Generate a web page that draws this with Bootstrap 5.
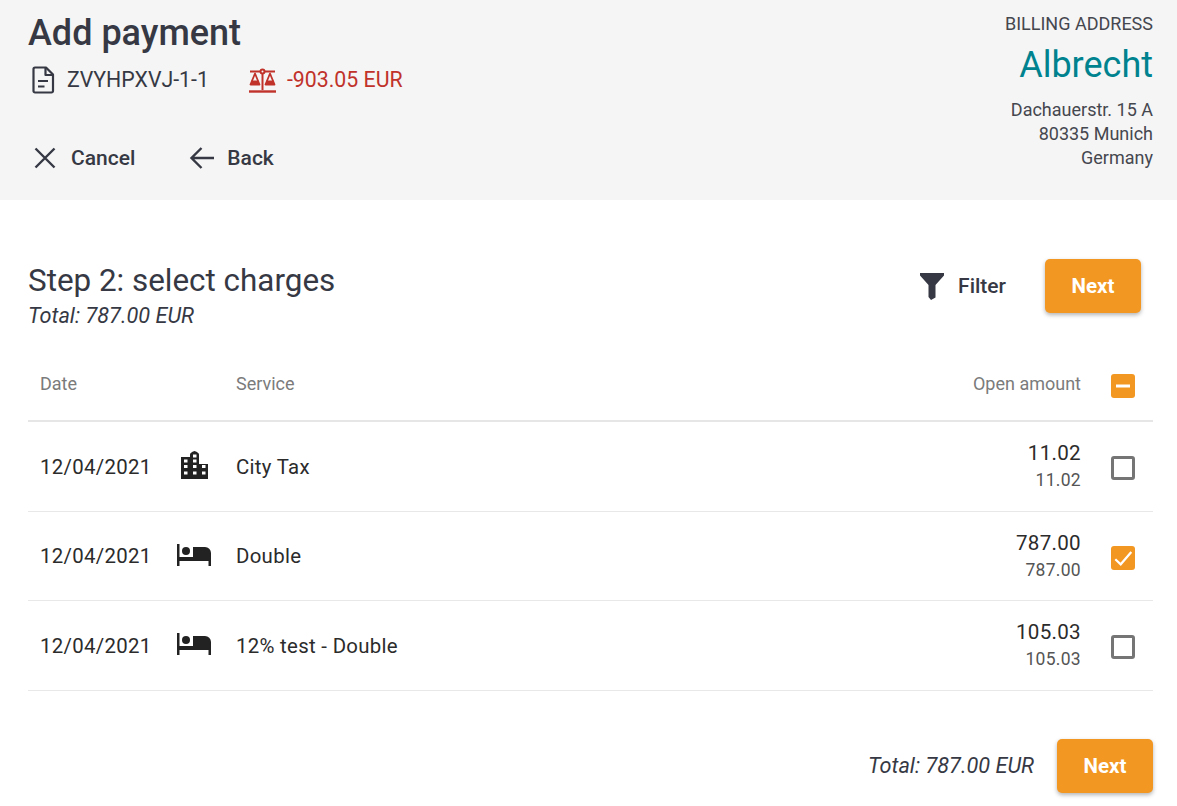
<!DOCTYPE html>
<html lang="en">
<head>
<meta charset="utf-8">
<title>Add payment</title>
<link href="https://cdn.jsdelivr.net/npm/bootstrap@5.3.0/dist/css/bootstrap.min.css" rel="stylesheet">
<style>
html,body{height:806px;overflow:hidden}
body{font-family:Roboto,"Liberation Sans",sans-serif;color:#2b2b2b;background:#fff}
.head-band{background:#f5f5f5;height:200px;padding:12px 24px 0 28px;color:#363944}
.page-title{font-size:36px;font-weight:500;line-height:42px;margin:0}
.meta-row{margin-top:8px;height:36px;font-size:21.3px;line-height:24px;gap:40px}
.meta-item{gap:12px}
.meta-item svg{display:block}
.meta-doc{padding-left:3px}
.meta-neg{gap:11px}
.neg{color:#c0322a}
.act-row{margin-top:48px;gap:53px;padding-left:6px}
.act{gap:15px;color:#363944;background:none;border:0;padding:0;font-weight:500;font-size:21px;line-height:24px}
.act-back{gap:13px}
.bill{text-align:right;font-size:18px;line-height:24px;color:#45474f;margin-top:-1px}
.bill-label{font-size:18px;line-height:24px;margin-top:1px}
.bill-name{font-size:36px;line-height:40px;color:#00838f;margin:9px 0 13px;font-weight:400}
.main-band{padding:0 24px 0 28px}
.step-row{height:150px;padding-top:60px}
.step-title{font-size:31.4px;line-height:41px;margin:0;font-weight:400;color:#363944}
.step-total{font-style:italic;font-size:21.7px;line-height:24px;color:#363944;margin-top:3px}
.next-btn{background:#f39723;color:#fff;font-weight:700;font-size:20.5px;width:96px;height:54px;border:0;border-radius:5px;box-shadow:0 2px 4px rgba(0,0,0,.3);padding:0}
.next-foot{padding-top:2px}
.filter-btn{background:none;border:0;padding:0;color:#363944;font-weight:500;font-size:21px;gap:13px}
.filter-label{padding-top:2px}
.top-actions{gap:39px;padding-right:12px;margin-top:-1px}
.charge-table{margin:0;table-layout:fixed;width:100%;--bs-table-bg:transparent;color:#2b2b2b}
.charge-table th{font-weight:400;font-size:18px;color:#7b7b7b;height:71px;padding:0 12px 3px;border-bottom:2px solid #e6e6e6;vertical-align:middle}
.charge-table td{font-size:20.4px;height:90px;padding:2px 12px 0;border-bottom:1px solid #e8e8e8;vertical-align:middle;letter-spacing:.3px}
.charge-table .row-mid td{height:89px}
.charge-table .col-date{width:196px}
.charge-table th.col-check{width:60px;padding:1px 0 0 18px}
.charge-table td.col-check{padding:4px 0 0 18px}
.charge-table .amt-cell{padding-top:1px}
.charge-table .row-mid .amt-cell{padding-top:3px}
.date-cell{gap:28px}
.date-cell svg{display:block;flex:none}
.city-ic{margin-top:-5px;margin-left:1px}
.bed-ic{margin-top:-3px;margin-left:-3px}
.amt-main{font-size:20.6px;line-height:27px}
.amt-sub{font-size:17.5px;line-height:27px;color:#555}
.box{display:block;width:24px;height:24px;border-radius:3px}
.box svg{display:block}
.box-empty{border:3px solid #757575}
.box-on{background:#f39723}
.foot-row{margin-top:48px;gap:23px}
.foot-total{font-style:italic;font-size:21.7px;line-height:24px;color:#363944}
</style>
</head>
<body>
<div class="head-band d-flex justify-content-between">
  <div>
    <h1 class="page-title">Add payment</h1>
    <div class="meta-row d-flex align-items-center">
      <div class="meta-item meta-doc d-flex align-items-center">
        <svg width="24" height="28" viewBox="0 0 24 28" fill="none" stroke="#363944" stroke-width="2.200" stroke-linejoin="round"><path d="M4 1.500h11l7 7v16.500a1.500 1.500 0 0 1-1.500 1.500H4A1.500 1.500 0 0 1 2.500 25V3A1.500 1.500 0 0 1 4 1.500z"/><path d="M14.500 1.500v7.500h7.500"/><path d="M7 15h10M7 20.500h6.500"/></svg>
        <span>ZVYHPXVJ-1-1</span>
      </div>
      <div class="meta-item meta-neg neg d-flex align-items-center" >
        <svg width="27" height="25" viewBox="0 0 27 25" fill="none" stroke="#c0322a" stroke-width="2"><path d="M0 23.500h27" stroke-width="2.400"/><path d="M13.500 5v17"/><circle cx="13.500" cy="3.500" r="2"/><path d="M1 3.500h10.500M15.500 3.500H26"/><path d="M6 5.500L1.500 16.500h9zM21 5.500l-4.500 11h9z" stroke-linejoin="round" stroke-width="1.800"/><path d="M2.500 12.500h7v4h-7zM17.500 12.500h7v4h-7z" fill="#c0322a" stroke="none"/></svg>
        <span>-903.05 EUR</span>
      </div>
    </div>
    <div class="act-row d-flex align-items-center">
      <button class="act d-flex align-items-center" type="button">
        <svg width="22" height="22" viewBox="0 0 22 22" fill="none" stroke="#363944" stroke-width="2.400"><path d="M1.500 1.500l19 19M20.500 1.500l-19 19"/></svg>Cancel
      </button>
      <button class="act act-back d-flex align-items-center" type="button">
        <svg width="26" height="24" viewBox="0 0 26 24" fill="none" stroke="#363944" stroke-width="2.400"><path d="M26 12H4M13.500 2L3.500 12l10 10"/></svg>Back
      </button>
    </div>
  </div>
  <div class="bill">
    <div class="bill-label">BILLING ADDRESS</div>
    <div class="bill-name">Albrecht</div>
    <div>Dachauerstr. 15 A</div>
    <div>80335 Munich</div>
    <div>Germany</div>
  </div>
</div>
<div class="main-band">
  <div class="step-row d-flex justify-content-between align-items-start">
    <div>
      <h2 class="step-title">Step 2: select charges</h2>
      <div class="step-total">Total: 787.00 EUR</div>
    </div>
    <div class="top-actions d-flex align-items-center">
      <button class="filter-btn d-flex align-items-center" type="button">
        <svg width="26" height="28" viewBox="0 0 26 28" fill="#363944"><path d="M1 1h24v2.500L16.500 13v12.500L12 28l-2.500-3V13L1 3.500z"/></svg><span class="filter-label">Filter</span>
      </button>
      <button class="next-btn" type="button">Next</button>
    </div>
  </div>
  <table class="table charge-table">
    <thead>
      <tr>
        <th class="col-date">Date</th>
        <th>Service</th>
        <th class="text-end">Open amount</th>
        <th class="col-check"><span class="box box-on"><svg width="24" height="24" viewBox="0 0 24 24" fill="none" stroke="#fff" stroke-width="3"><path d="M5 12h14"/></svg></span></th>
      </tr>
    </thead>
    <tbody>
      <tr>
        <td><div class="date-cell d-flex align-items-center"><span>12/04/2021</span>
          <svg class="city-ic" width="27" height="28" viewBox="0 0 27 28" fill="#222"><path fill-rule="evenodd" d="M0 28V6h9V3.500Q9 1.500 13.500 0 18 1.500 18 3.500V13h9v15zM3 8.500V11.500h3.500V8.500zM3 14v3h3.500v-3zm0 6.500v3h3.500v-3zM12 3.500v3h3.500v-3zm0 5v3h3.500v-3zM12 14v3h3.500v-3zm0 6.500v3h3.500v-3zM21 14v3h3.500v-3zm0 6.500v3h3.500v-3z"/></svg>
        </div></td>
        <td>City Tax</td>
        <td class="text-end amt-cell"><div class="amt-main">11.02</div><div class="amt-sub">11.02</div></td>
        <td class="col-check"><span class="box box-empty"></span></td>
      </tr>
      <tr class="row-mid">
        <td><div class="date-cell d-flex align-items-center"><span>12/04/2021</span>
          <svg class="bed-ic" width="34" height="22" viewBox="0 0 34 22" fill="#222"><path d="M0 0h2.500v13H16V3h12a6 6 0 0 1 6 6v13h-2.500v-5H2.500v5H0z"/><circle cx="9" cy="7" r="4"/></svg>
        </div></td>
        <td>Double</td>
        <td class="text-end amt-cell"><div class="amt-main">787.00</div><div class="amt-sub">787.00</div></td>
        <td class="col-check"><span class="box box-on"><svg width="24" height="24" viewBox="0 0 24 24" fill="none" stroke="#fff" stroke-width="2.200"><path d="M4.300 13.300l5.400 5L20.300 6"/></svg></span></td>
      </tr>
      <tr>
        <td><div class="date-cell d-flex align-items-center"><span>12/04/2021</span>
          <svg class="bed-ic" width="34" height="22" viewBox="0 0 34 22" fill="#222"><path d="M0 0h2.500v13H16V3h12a6 6 0 0 1 6 6v13h-2.500v-5H2.500v5H0z"/><circle cx="9" cy="7" r="4"/></svg>
        </div></td>
        <td>12% test - Double</td>
        <td class="text-end amt-cell"><div class="amt-main">105.03</div><div class="amt-sub">105.03</div></td>
        <td class="col-check"><span class="box box-empty"></span></td>
      </tr>
    </tbody>
  </table>
  <div class="foot-row d-flex justify-content-end align-items-center">
    <span class="foot-total">Total: 787.00 EUR</span>
    <button class="next-btn next-foot" type="button">Next</button>
  </div>
</div>
<script src="https://cdn.jsdelivr.net/npm/bootstrap@5.3.0/dist/js/bootstrap.bundle.min.js"></script>
</body>
</html>
